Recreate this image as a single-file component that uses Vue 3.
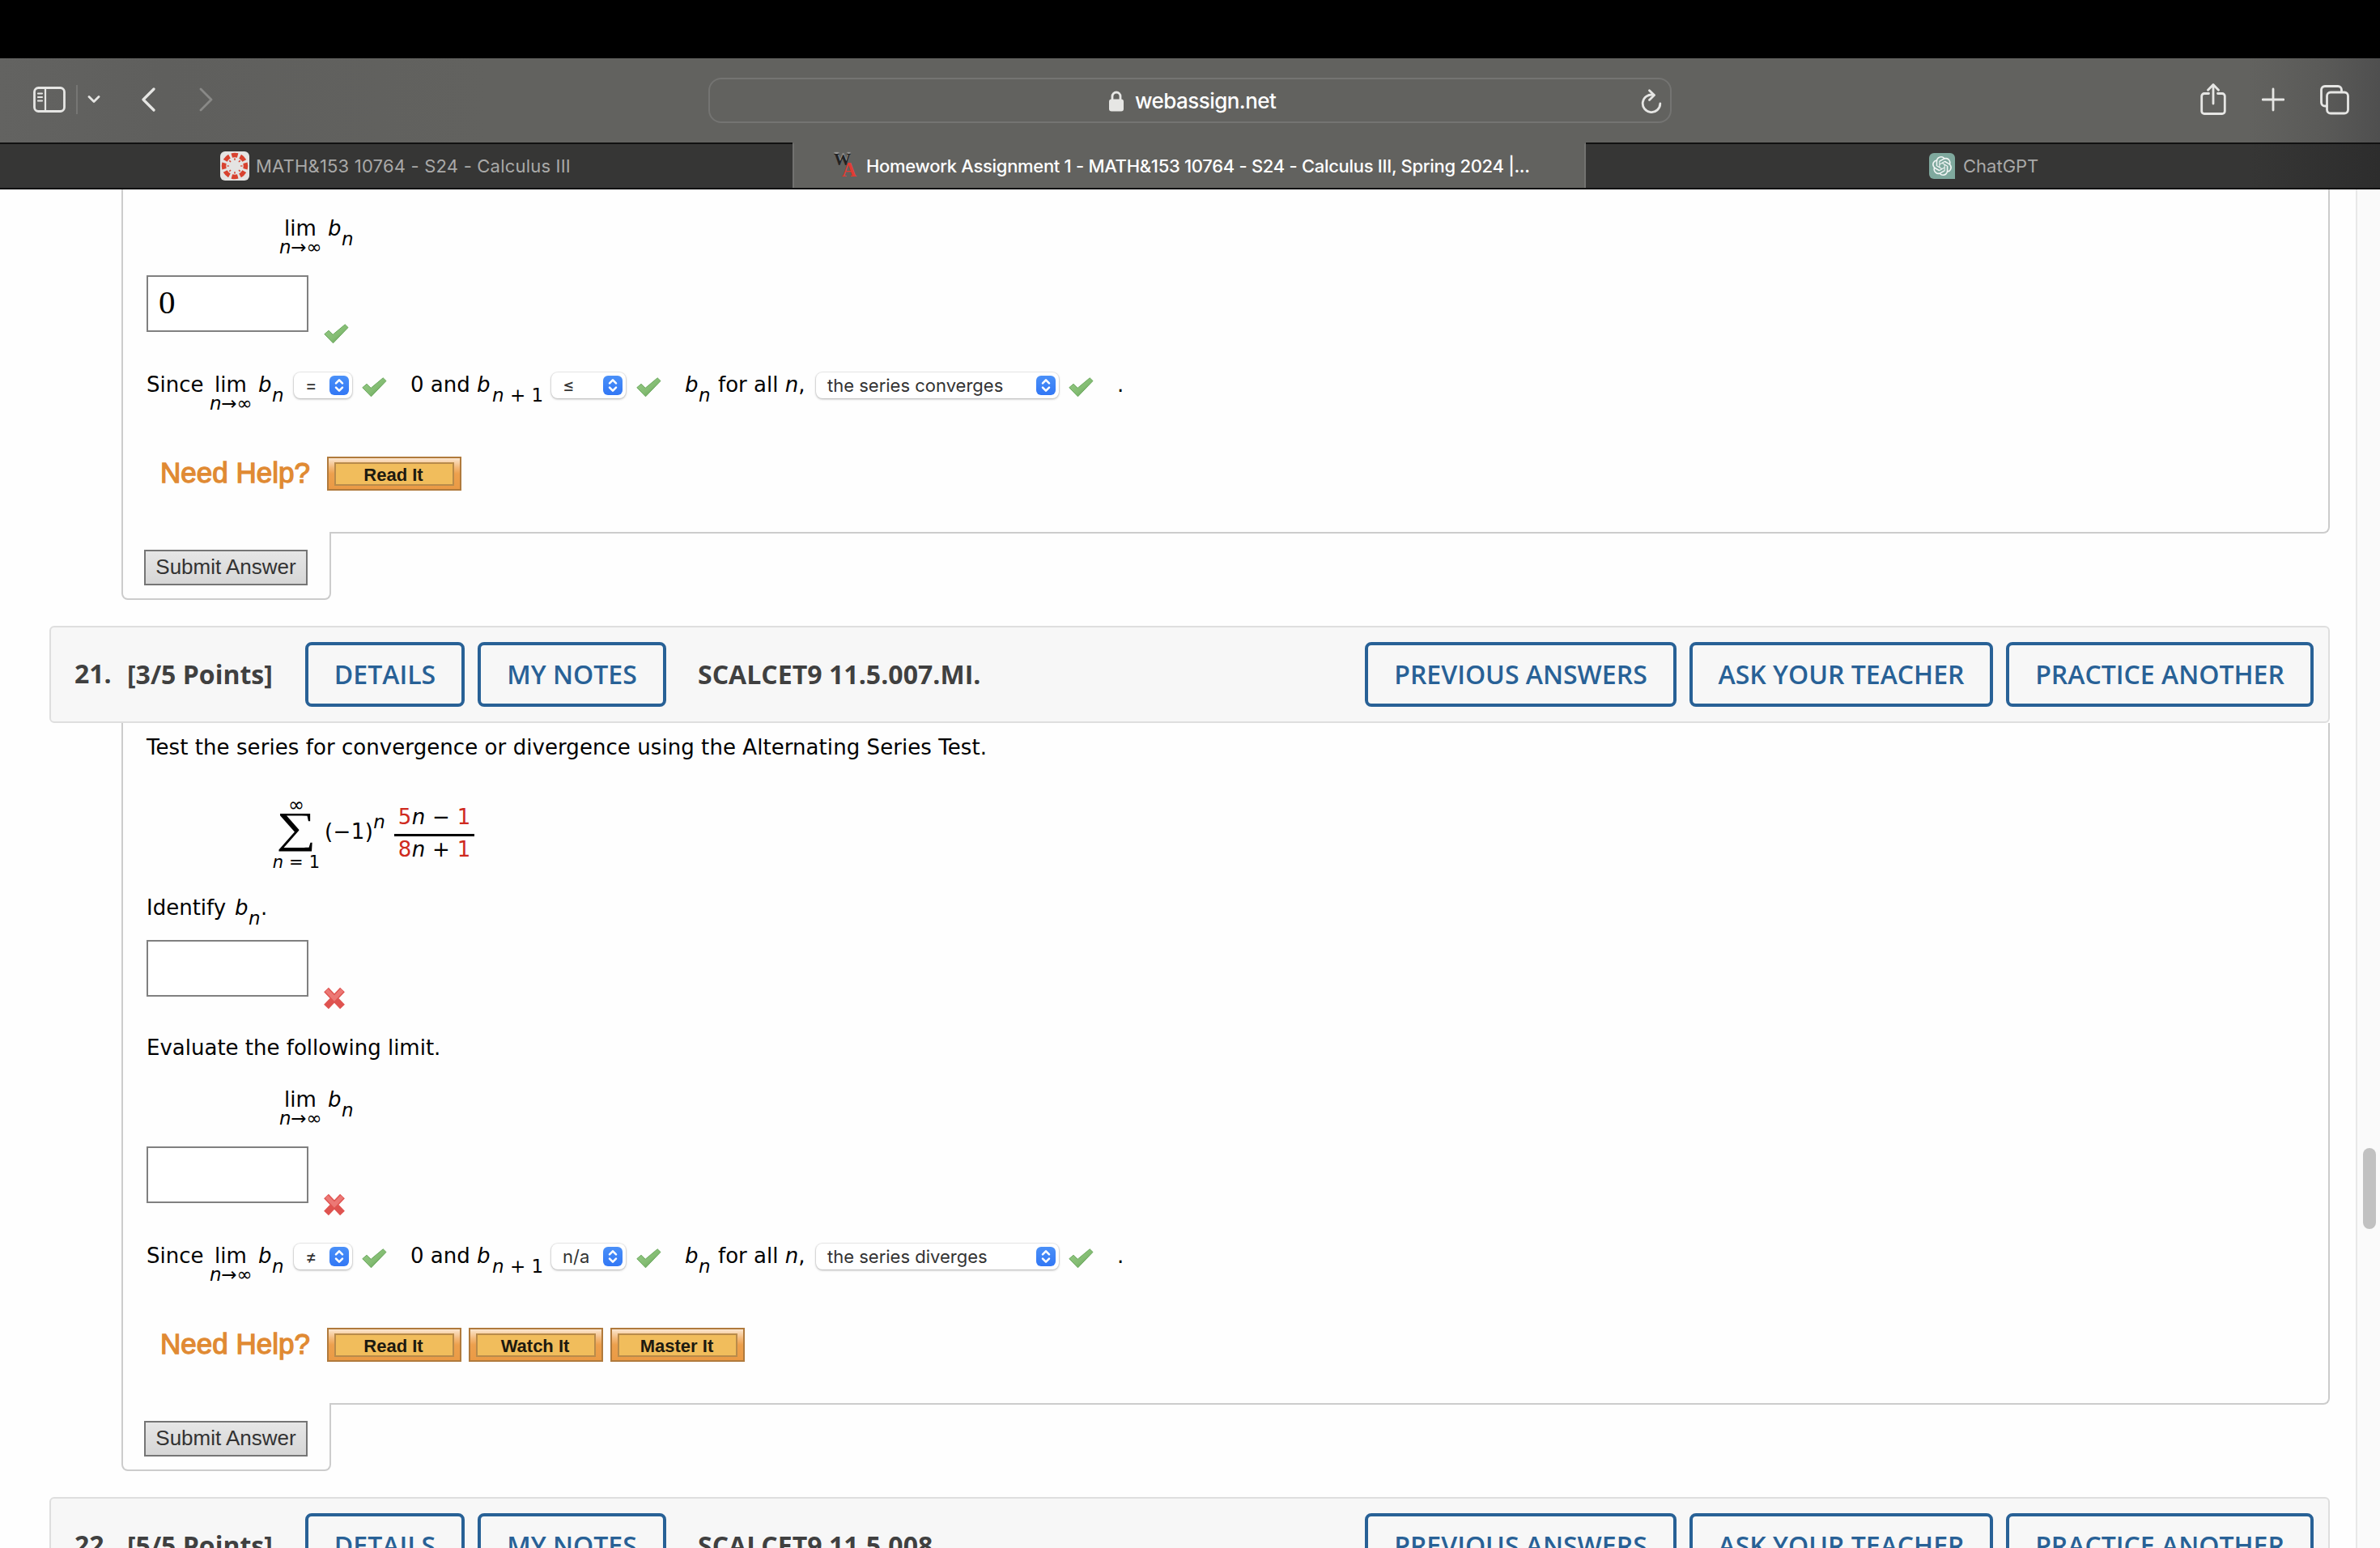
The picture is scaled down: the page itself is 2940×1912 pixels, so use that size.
<template>
	<div class="screen">
		<div class="menu-strip"></div>

		<header class="toolbar">
			<div class="tools-left">
				<svg class="ico-sidebar" width="40" height="32" viewBox="0 0 40 32">
					<rect x="1.5" y="1.5" width="37" height="29" rx="5" />
					<path d="M15 2v28M6 8.5h5M6 13h5M6 17.5h5" />
				</svg>
				<span class="divider"></span>
				<svg class="ico-down" width="16" height="10" viewBox="0 0 16 10"><path d="M2 1.5l6 6 6-6" /></svg>
				<svg class="ico-back" width="18" height="30" viewBox="0 0 18 30"><path d="M16 2L3 15l13 13" /></svg>
				<svg class="ico-forward" width="18" height="30" viewBox="0 0 18 30"><path d="M2 2l13 13L2 28" /></svg>
			</div>
			<div class="address">
				<svg class="ico-lock" width="18" height="26" viewBox="0 0 18 26">
					<path d="M4 12V7a5 5 0 0 1 10 0v5" />
					<rect x="0" y="10.5" width="18" height="15" rx="3" />
				</svg>
				<span class="host">webassign.net</span>
				<svg class="ico-reload" width="26" height="30" viewBox="0 0 26 30">
					<path d="M15.5 7.3A10.8 10.8 0 1 0 23.8 18" />
					<path d="M10.5 1.8l6 5.7-6 6" />
				</svg>
			</div>
			<div class="tools-right">
				<svg width="32" height="40" viewBox="0 0 32 40">
					<path d="M10.5 12.5H5a3.3 3.3 0 0 0-3.3 3.3V34A3.3 3.3 0 0 0 5 37.500h22a3.300 3.300 0 0 0 3.300-3.500V15.800A3.300 3.300 0 0 0 27 12.500h-5.500M16 25V2M9.500 8.200L16 1.500l6.500 6.700" />
				</svg>
				<svg width="28" height="40" viewBox="0 0 28 40"><path d="M14 7v26M1 20h26" /></svg>
				<svg width="36" height="40" viewBox="0 0 36 40">
					<path d="M8 28H6a4.500 4.500 0 0 1-4.500-4.500V8A4.500 4.500 0 0 1 6 3.500h16A4.500 4.500 0 0 1 26.500 8v2.500" />
					<rect x="8.500" y="11" width="26" height="26" rx="4.500" />
				</svg>
			</div>
		</header>

		<nav class="tabs">
			<div class="tab">
				<svg class="fav-canvas" width="36" height="36" viewBox="0 0 36 36">
					<rect width="36" height="36" rx="6" fill="#e4e3e2" />
					<circle cx="18" cy="18" r="13.500" fill="none" stroke="#d8422f" stroke-width="5.500" pathLength="80" stroke-dasharray="7 3" stroke-dashoffset="-1.500" transform="rotate(-22.500 18 18)" />
					<circle cx="18" cy="18" r="8.200" fill="none" stroke="#d8422f" stroke-width="2.500" pathLength="80" stroke-dasharray="2.400 7.600" stroke-dashoffset="1.200" />
				</svg>
				<span class="tab-canvas">MATH&amp;153 10764 - S24 - Calculus III</span>
			</div>
			<div class="tab active">
				<span class="fav-wa"><b>W</b><b class="red">A</b></span>
				<span class="tab-homework">Homework Assignment 1 - MATH&amp;153 10764 - S24 - Calculus III, Spring 2024 |...</span>
			</div>
			<div class="tab">
				<svg class="fav-gpt" width="32" height="32" viewBox="0 0 32 32">
					<path fill="#7fa99e" d="M6 0h20a6 6 0 0 1 6 6v26H6a6 6 0 0 1-6-6V6a6 6 0 0 1 6-6z" />
					<path transform="translate(4 4)" fill="#f2f6f5" d="M22.2819 9.8211a5.9847 5.9847 0 0 0-.5157-4.9108 6.0462 6.0462 0 0 0-6.5098-2.9A6.0651 6.0651 0 0 0 4.9807 4.1818a5.9847 5.9847 0 0 0-3.9977 2.9 6.0462 6.0462 0 0 0 .7427 7.0966 5.98 5.98 0 0 0 .511 4.9107 6.051 6.051 0 0 0 6.5146 2.9001A5.9847 5.9847 0 0 0 13.2599 24a6.0557 6.0557 0 0 0 5.7718-4.2058 5.9894 5.9894 0 0 0 3.9977-2.9001 6.0557 6.0557 0 0 0-.7475-7.0729zm-9.022 12.6081a4.4755 4.4755 0 0 1-2.8764-1.0408l.1419-.0804 4.7783-2.7582a.7948.7948 0 0 0 .3927-.6813v-6.7369l2.02 1.1686a.071.071 0 0 1 .038.052v5.5826a4.504 4.504 0 0 1-4.4945 4.4944zm-9.6607-4.1254a4.4708 4.4708 0 0 1-.5346-3.0137l.142.0852 4.783 2.7582a.7712.7712 0 0 0 .7806 0l5.8428-3.3685v2.3324a.0804.0804 0 0 1-.0332.0615L9.74 19.9502a4.4992 4.4992 0 0 1-6.1408-1.6464zM2.3408 7.8956a4.485 4.485 0 0 1 2.3655-1.9728V11.6a.7664.7664 0 0 0 .3879.6765l5.8144 3.3543-2.0201 1.1685a.0757.0757 0 0 1-.071 0l-4.8303-2.7865A4.504 4.504 0 0 1 2.3408 7.872zm16.5963 3.8558L13.1038 8.364 15.1192 7.2a.0757.0757 0 0 1 .071 0l4.8303 2.7913a4.4944 4.4944 0 0 1-.6765 8.1042v-5.6772a.79.79 0 0 0-.407-.667zm2.0107-3.0231l-.142-.0852-4.7735-2.7818a.7759.7759 0 0 0-.7854 0L9.409 9.2297V6.8974a.0662.0662 0 0 1 .0284-.0615l4.8303-2.7866a4.4992 4.4992 0 0 1 6.6802 4.66zM8.3065 12.863l-2.02-1.1638a.0804.0804 0 0 1-.038-.0567V6.0742a4.4992 4.4992 0 0 1 7.3757-3.4537l-.142.0805L8.704 5.459a.7948.7948 0 0 0-.3927.6813zm1.0976-2.3654l2.602-1.4998 2.6069 1.4998v2.9994l-2.5974 1.4997-2.6067-1.4997Z" />
				</svg>
				<span class="tab-gpt">ChatGPT</span>
			</div>
		</nav>

		<div class="viewport">
			<main class="page">
				<section v-for="q in questions" :key="q.number">
					<div v-if="q.points" class="q-header">
						<span class="q-number">{{ q.number }}.</span>
						<span class="q-points">{{ q.points }}</span>
						<button class="wa-btn details">DETAILS</button>
						<button class="wa-btn notes">MY NOTES</button>
						<span class="q-code">{{ q.code }}</span>
						<button class="wa-btn previous">PREVIOUS ANSWERS</button>
						<button class="wa-btn teacher">ASK YOUR TEACHER</button>
						<button class="wa-btn practice">PRACTICE ANOTHER</button>
					</div>

					<template v-if="q.help">
						<div class="q-body">
							<template v-if="q.intro">
								<p class="line intro">{{ q.intro }}</p>
								<div class="series">
									<div class="sum">
										<span class="sum-top">∞</span>
										<span class="sigma">∑</span>
										<span class="sum-bottom"><i>n</i> = 1</span>
									</div>
									<span class="power">(−1)<i>n</i></span>
									<span class="fraction">
										<span class="numer"><em>5</em><i>n</i> − <em>1</em></span>
										<span class="denom"><em>8</em><i>n</i> + <em>1</em></span>
									</span>
								</div>
								<p class="line identify"><span class="identify-label">Identify</span><i class="b">b</i><i class="sub dot-sub">n</i>.</p>
								<div class="answer short">
									<input class="answer-box" type="text" />
									<svg class="cross" width="28" height="28" viewBox="0 0 28 28"><path d="M4 3.500l20 21M24 3.500L4 24.500" /><path class="shine" d="M4.500 4l9.500 10 9.500-10" /></svg>
								</div>
								<p class="line evaluate">Evaluate the following limit.</p>
							</template>

							<div class="line limit">
								<span class="lim"><span>lim</span><span class="under"><i>n</i>→∞</span></span>
								<i class="b">b</i>
								<i class="sub">n</i>
							</div>

							<div class="answer">
								<input class="answer-box" type="text" :value="q.limit" />
								<svg v-if="q.limit" class="tick low" width="31" height="25" viewBox="0 0 31 25"><path d="M.8 12.700L6 8.300l5.200 5L26.200.8l3.800 3.700L11.500 23.800z" /></svg>
								<svg v-else class="cross" width="28" height="28" viewBox="0 0 28 28"><path d="M4 3.500l20 21M24 3.500L4 24.500" /><path class="shine" d="M4.500 4l9.500 10 9.500-10" /></svg>
							</div>

							<div class="line since">
								<span class="w-since">Since</span>
								<span class="lim"><span>lim</span><span class="under"><i>n</i>→∞</span></span>
								<i class="b">b</i>
								<i class="sub sub-first">n</i>
								<template v-for="(value, i) in q.selects" :key="i">
									<span class="select" :class="'select-' + i">{{ value }}<span class="arrows"><svg width="24" height="24" viewBox="0 0 24 24"><path d="M8 9.300l4-4 4 4M8 14.700l4 4 4-4" /></svg></span></span>
									<svg class="tick" width="31" height="25" viewBox="0 0 31 25"><path d="M.8 12.700L6 8.300l5.200 5L26.200.8l3.800 3.700L11.500 23.800z" /></svg>
									<template v-if="i === 0">
										<span class="w-and">0 and <i>b</i></span>
										<span class="sub w-next"><i>n</i> + 1</span>
									</template>
									<template v-else-if="i === 1">
										<i class="b">b</i>
										<i class="sub sub-all">n</i>
										<span class="w-all">for all <i>n</i>,</span>
									</template>
									<template v-else>.</template>
								</template>
							</div>

							<div class="help">
								<span class="help-label">Need Help?</span>
								<button v-for="item in q.help" :key="item" class="help-btn"><span>{{ item }}</span></button>
							</div>
						</div>
						<div class="submit-tab"><button class="submit">Submit Answer</button></div>
					</template>
				</section>
			</main>
			<div class="scroll-track"><div class="thumb"></div></div>
		</div>

		<svg class="defs" width="0" height="0">
			<linearGradient id="tick-fill" x1="0" y1="0" x2="1" y2="1">
				<stop offset="0" stop-color="#95c985" />
				<stop offset="0.550" stop-color="#84bd73" />
				<stop offset="1" stop-color="#5a944e" />
			</linearGradient>
		</svg>
	</div>
</template>

<script setup>
const questions = [
	{
		number: 20,
		limit: "0",
		selects: ["=", "≤", "the series converges"],
		help: ["Read It"],
	},
	{
		number: 21,
		points: "[3/5 Points]",
		code: "SCALCET9 11.5.007.MI.",
		intro: "Test the series for convergence or divergence using the Alternating Series Test.",
		limit: "",
		selects: ["≠", "n/a", "the series diverges"],
		help: ["Read It", "Watch It", "Master It"],
	},
	{
		number: 22,
		points: "[5/5 Points]",
		code: "SCALCET9 11.5.008.",
	},
];
</script>

<style>
html,
body {
	margin: 0;
	overflow: hidden;
}
</style>

<style scoped>
* {
	box-sizing: border-box;
}

.screen {
	width: 2940px;
	height: 1912px;
	overflow: hidden;
	display: flex;
	flex-direction: column;
	background: #fefefe;
	font-family: "DejaVu Sans", Verdana, sans-serif;
	font-size: 26px;
	color: #000000;
}

.defs {
	position: absolute;
}

.menu-strip {
	height: 72px;
	flex: none;
	background: #000000;
}

.toolbar {
	height: 104px;
	flex: none;
	display: grid;
	grid-template-columns: 875px 1190px 1fr;
	background: linear-gradient(90deg, #636361 0, #5f5f5d 200px, #62625f 600px, #62625f 2780px, #5a5a58 2870px, #4f4f4f 2940px);
}

.toolbar svg {
	flex: none;
	fill: none;
	stroke: #e6e6e4;
	stroke-width: 2.8;
	stroke-linecap: round;
	stroke-linejoin: round;
}

.tools-left {
	display: flex;
	align-items: center;
	padding: 0 0 2px 41px;
}

.ico-sidebar path {
	stroke-width: 2.2;
}

.divider {
	width: 2px;
	height: 36px;
	margin-left: 13px;
	background: #767674;
}

.ico-down {
	margin-left: 12px;
}

.toolbar .ico-back {
	margin-left: 50px;
	stroke-width: 3.2;
}

.toolbar .ico-forward {
	margin-left: 54px;
	stroke: #898987;
}

.address {
	height: 56px;
	margin-top: 24px;
	display: flex;
	align-items: center;
	border: 2px solid #747472;
	border-radius: 16px;
	padding: 2px 0 0 493px;
}

.toolbar .ico-lock rect {
	fill: #e6e6e4;
	stroke: none;
}

.host {
	width: 174px;
	margin-left: 14px;
	font: 500 26px/36px Inter, sans-serif;
	letter-spacing: -0.55px;
	color: #ffffff;
}

.ico-reload {
	margin-left: 451px;
}

.tools-right {
	display: flex;
	align-items: center;
	justify-content: flex-end;
	gap: 44px;
	padding: 0 38px 3px 0;
}

.tabs {
	height: 58px;
	flex: none;
	display: grid;
	grid-template-columns: 979px 980px 1fr;
	background: linear-gradient(90deg, #363635 2780px, #2d2d2d 2940px);
	border-bottom: 2px solid #111111;
}

.tab {
	display: flex;
	align-items: center;
	border-top: 2px solid #111111;
	font: 400 22px/30px Inter, sans-serif;
	color: #a9a9a8;
	white-space: nowrap;
}

.tab.active {
	background: #62625f;
	border-top-color: #62625f;
	border-left: 2px solid #727270;
	border-right: 2px solid #727270;
	font-weight: 500;
	color: #ffffff;
}

.fav-canvas {
	margin-left: 272px;
}

.tab-canvas {
	margin-left: 8px;
	letter-spacing: 0.2px;
}

.fav-wa {
	width: 28px;
	height: 36px;
	margin-left: 49px;
	display: flex;
	font: bold 21px/20px "Liberation Serif", serif;
	color: #222222;
	text-shadow: 0 -2px 1px #a0a0a0;
}

.fav-wa .red {
	margin: 13px 0 0 -11px;
	font-size: 25px;
	color: #e23b33;
	text-shadow: none;
}

.tab-homework {
	margin-left: 12px;
	letter-spacing: -0.3px;
}

.fav-gpt {
	margin-left: 424px;
}

.tab-gpt {
	margin-left: 10px;
}

.viewport {
	flex: 1;
	min-height: 0;
	display: flex;
}

.page {
	width: 2910px;
	padding-left: 61px;
	overflow: hidden;
}

.scroll-track {
	width: 30px;
	padding: 1184px 0 0 7px;
	background: #fafafa;
	border-left: 2px solid #e8e8e8;
}

.thumb {
	width: 16px;
	height: 100px;
	border-radius: 8px;
	background: #c1c1c1;
}

.q-header {
	width: 2817px;
	height: 120px;
	display: flex;
	align-items: center;
	padding: 0 18px 0 29px;
	border: 2px solid #dedede;
	border-radius: 6px;
	background: #f7f7f7;
	font: 700 32px/44px "Open Sans", sans-serif;
	color: #404040;
	white-space: nowrap;
}

.q-number {
	width: 65px;
	margin-top: -3px;
}

.q-points {
	width: 220px;
}

.q-code {
	margin-left: 39px;
	letter-spacing: 0.04px;
}

.wa-btn {
	height: 80px;
	flex: none;
	padding: 0;
	border: 4px solid #286196;
	border-radius: 8px;
	background: transparent;
	font: 600 32px/44px "Open Sans", sans-serif;
	color: #286196;
}

.details {
	width: 197px;
}

.notes {
	width: 233px;
	margin-left: 16px;
}

.previous {
	width: 385px;
	margin-left: auto;
}

.teacher {
	width: 375px;
	margin-left: 16px;
}

.practice {
	width: 380px;
	margin-left: 16px;
}

.q-body {
	width: 2728px;
	margin-left: 89px;
	padding-left: 29px;
	border: 2px solid #cccccc;
	border-top: none;
	border-bottom-right-radius: 8px;
}

section:first-child .q-body {
	padding-top: 30px;
}

.line {
	margin: 0;
	line-height: 36px;
	white-space: nowrap;
}

.intro {
	padding-top: 12px;
	height: 92px;
	letter-spacing: 0.065px;
}

.identify {
	height: 58px;
}

.identify-label {
	display: inline-block;
	width: 109px;
}

.evaluate {
	height: 64px;
}

.limit {
	height: 76px;
	padding-left: 164px;
}

.since {
	height: 107px;
}

.line > span,
.line > i,
.line > svg {
	display: inline-block;
}

.line .lim {
	width: 60px;
	padding-right: 8px;
	display: inline-flex;
	flex-direction: column;
	align-items: center;
}

.under {
	margin-top: -7px;
	font-size: 23px;
	line-height: 24px;
	letter-spacing: -0.3px;
}

.b {
	width: 17px;
}

.sub {
	width: 26px;
	vertical-align: -12px;
	font-size: 23px;
	line-height: 0;
}

.line .sub-first {
	width: 27px;
}

.dot-sub {
	width: 15px;
}

.w-since {
	width: 78px;
}

.w-and {
	width: 101px;
}

.w-next {
	width: 73px;
}

.sub-all {
	width: 24px;
}

.w-all {
	width: 121px;
}

.select {
	height: 32px;
	margin-top: 3px;
	padding-left: 14px;
	vertical-align: top;
	position: relative;
	border-radius: 8px;
	background: #ffffff;
	box-shadow: 0 0 0 1px rgba(0, 0, 0, 0.06), 0 1px 3px rgba(0, 0, 0, 0.28);
	font: 400 22px/32px Inter, sans-serif;
	color: #333333;
}

.select-0 {
	width: 72px;
	margin-right: 12px;
}

.select-1 {
	width: 92px;
	margin-right: 13px;
}

.select-2 {
	width: 300px;
	margin-right: 12px;
}

.arrows {
	position: absolute;
	top: 4px;
	right: 4px;
	width: 24px;
	height: 24px;
	border-radius: 6px;
	background: linear-gradient(#4a90f8, #3277f5);
}

.arrows svg {
	display: block;
	fill: none;
	stroke: #ffffff;
	stroke-width: 2.5;
	stroke-linecap: round;
	stroke-linejoin: round;
}

.tick {
	margin: 9px 29px 0 0;
	vertical-align: top;
	fill: url(#tick-fill);
	stroke: #6ba85e;
	stroke-width: 1;
}

.tick.low {
	margin: 60px 0 0 19px;
}

.cross {
	margin: 58px 0 0 18px;
	fill: none;
	stroke: #df5350;
	stroke-width: 8;
}

.cross .shine {
	stroke: #ec7875;
	stroke-width: 5;
}

.answer {
	height: 117px;
	display: flex;
	align-items: flex-start;
}

.answer.short {
	height: 115px;
}

.answer-box {
	width: 200px;
	height: 70px;
	padding: 0 13px 5px;
	border: 2px solid #808080;
	background: #ffffff;
	font: 41px/61px "Liberation Serif", serif;
	color: #000000;
}

.series {
	height: 118px;
	padding-left: 156px;
	display: flex;
	align-items: flex-start;
}

.sum {
	width: 58px;
	display: flex;
	flex-direction: column;
	align-items: center;
	white-space: nowrap;
}

.sum-top {
	font-size: 24px;
	line-height: 18px;
}

.sigma {
	height: 44px;
	margin-top: -1px;
	font: 53px/40px "Liberation Serif", serif;
	transform: scaleX(1.3);
}

.sum-bottom {
	margin-top: 8px;
	font-size: 21px;
	line-height: 22px;
	letter-spacing: 0.2px;
}

.power {
	margin: 27px 0 0 6px;
	line-height: 30px;
	letter-spacing: 0.4px;
}

.power i {
	vertical-align: 13px;
	font-size: 23px;
	line-height: 0;
}

.fraction {
	width: 99px;
	margin-left: 11px;
	display: flex;
	flex-direction: column;
	text-align: center;
	line-height: 36px;
	letter-spacing: 0.3px;
}

.numer {
	height: 42px;
	margin-top: 6px;
	border-bottom: 3px solid #000000;
}

.denom {
	margin-top: -2px;
}

.fraction em {
	font-style: normal;
	color: #cf2a1e;
}

.help {
	height: 93px;
	display: flex;
	align-items: flex-start;
}

.help-label {
	width: 208px;
	margin-top: -1px;
	padding-left: 17px;
	font: 35px/42px "Liberation Sans", Arial, sans-serif;
	-webkit-text-stroke: 1.3px #e08a33;
	color: #e08a33;
}

.help-label + .help-btn {
	margin-left: 15px;
}

.help-btn {
	width: 166px;
	height: 42px;
	margin-left: 9px;
	padding: 5px 7px 4px;
	border: 2px solid #b07a3c;
	background: linear-gradient(#fbe6cf, #f3b878 30%, #eda04d 50%, #ea9a45);
}

.help-btn span {
	display: block;
	height: 29px;
	padding-right: 2px;
	border: 2px solid #b98b4a;
	background: #f1bd5c;
	font: bold 22px/27px "Liberation Sans", Arial, sans-serif;
	color: #1d1a10;
}

.submit-tab {
	width: 259px;
	height: 84px;
	margin: -2px 0 32px 89px;
	padding: 22px 0 0 26px;
	border: 2px solid #cccccc;
	border-top: none;
	border-radius: 0 0 8px 8px;
	background: #fefefe;
}

.submit {
	width: 202px;
	height: 44px;
	padding: 0 0 2px;
	border: 2px solid #757575;
	background: linear-gradient(#e6e6e6, #d6d6d6);
	font: 26px/38px "Liberation Sans", Arial, sans-serif;
	color: #333333;
	white-space: nowrap;
}
</style>
